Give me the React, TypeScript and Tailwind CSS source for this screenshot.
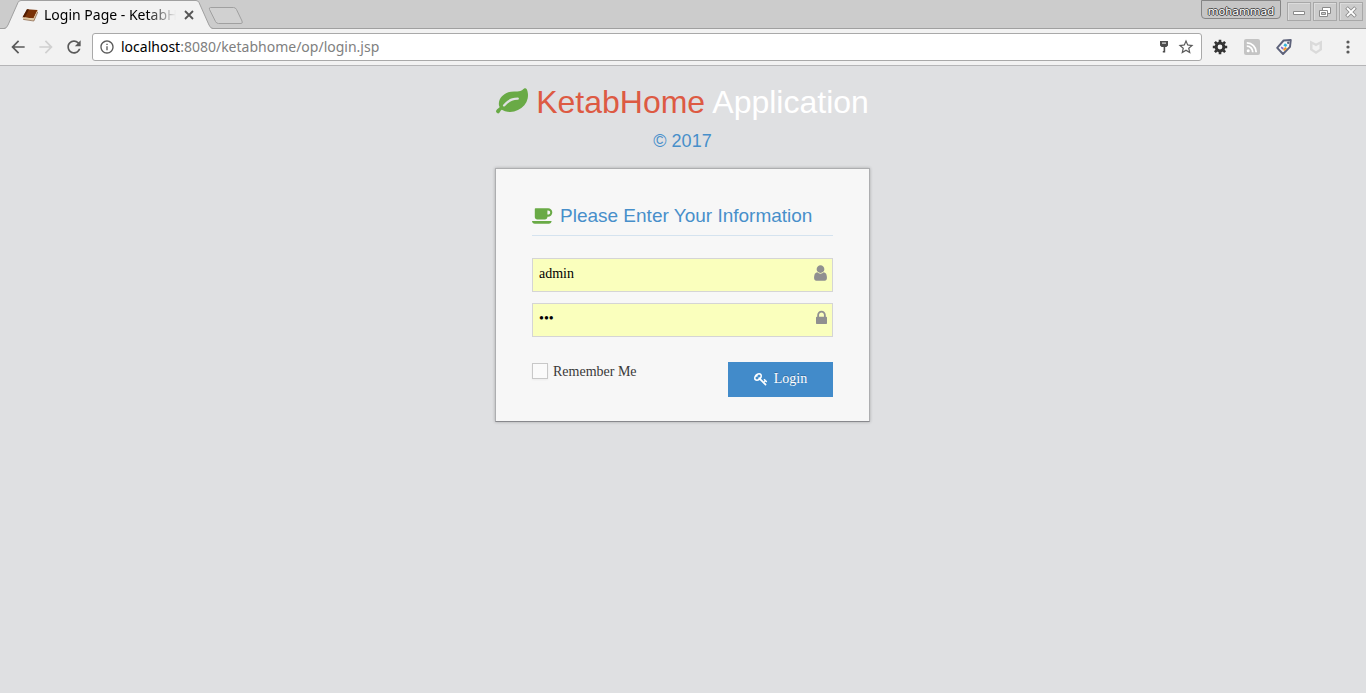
import React, { useState } from "react";

type IconProps = { className?: string };

function Glyph({ d, viewBox, className }: { d: string; viewBox: string; className?: string }) {
  return (
    <svg viewBox={viewBox} className={className} fill="currentColor" aria-hidden="true">
      <path d={d} />
    </svg>
  );
}

const LEAF =
  "M1280 704q0-26-19-45t-45-19q-172 0-318 49.5t-259.5 134-235.5 219.5q-19 21-19 45 0 26 19 45t45 19q24 0 45-19 27-24 74-71t67-66q137-124 268.5-176t313.5-52q26 0 45-19t19-45zm512-198q0 95-20 193-46 224-184.5 383t-357.5 268q-214 108-438 108-148 0-286-47-15-5-88-42t-96-37q-16 0-39.5 32t-45 70-52.5 70-60 32q-43 0-63.5-17.5t-45.5-59.5q-2-4-6-11t-5.5-10-3-9.5-1.5-13.5q0-35 31-73.5t68-65.5 68-56 31-48q0-4-14-38t-16-44q-9-51-9-104 0-115 43.5-220t119-184.5 170.5-139 204-95.5q55-18 145-25.5t179.5-9 178.5-6 163.5-24 113.5-56.5l29.5-29.5 29.5-28 27-20 36.5-16 43.5-4.5q39 0 70.5 46t47.5 112 24 124 8 96z";
const COFFEE =
  "M1664 576q0-80-56-136t-136-56h-64v384h64q80 0 136-56t56-136zm-1664 768h1792q0 106-75 181t-181 75h-1280q-106 0-181-75t-75-181zm1856-768q0 159-112.5 271.5t-271.5 112.5h-64v32q0 92-66 158t-158 66h-704q-92 0-158-66t-66-158v-736q0-26 19-45t45-19h1152q159 0 271.5 112.5t112.5 271.5z";
const USER =
  "M1536 1399q0 109-62.5 187t-150.5 78h-854q-88 0-150.5-78t-62.5-187q0-85 8.5-160.5t31.5-152 58.5-131 94-89 134.5-34.5q131 128 313 128t313-128q76 0 134.5 34.5t94 89 58.5 131 31.5 152 8.5 160.5zm-256-887q0 159-112.5 271.5t-271.5 112.5-271.5-112.5-112.5-271.5 112.5-271.5 271.5-112.5 271.5 112.5 112.5 271.5z";
const LOCK =
  "M640 768h512v-192q0-106-75-181t-181-75-181 75-75 181v192zm832 96v576q0 40-28 68t-68 28h-960q-40 0-68-28t-28-68v-576q0-40 28-68t68-28h32v-192q0-184 132-316t316-132 316 132 132 316v192h32q40 0 68 28t28 68z";
const KEY =
  "M832 512q0-80-56-136t-136-56-136 56-56 136q0 42 19 83-41-19-83-19-80 0-136 56t-56 136 56 136 136 56 136-56 56-136q0-42-19-83 41 19 83 19 80 0 136-56t56-136zm851 704q0 17-49 66t-66 49q-9 0-28.5-16t-36.5-33-38.5-40-24.5-26l-96 96 220 220q28 28 28 68 0 42-39 81t-81 39q-40 0-68-28l-671-671q-176 131-365 131-163 0-265.5-102.5t-102.5-265.5q0-160 95-313t248-248 313-95q163 0 265.5 102.5t102.5 265.5q0 189-131 365l355 355 96-96q-3-3-26-24.5t-40-38.5-33-36.5-16-28.5q0-17 49-66t66-49q13 0 23 10 6 6 46 44.5t82 79.5 86.5 86 73 78 28.5 41z";
const STAR =
  "M22 9.24l-7.19-.62L12 2 9.19 8.63 2 9.24l5.46 4.73L5.82 21 12 17.27 18.18 21l-1.63-7.03L22 9.24zM12 15.4l-3.76 2.27 1-4.28-3.32-2.88 4.38-.38L12 6.1l1.71 4.04 4.38.38-3.32 2.88 1 4.28L12 15.4z";
const BACK = "M20 11H7.83l5.59-5.59L12 4l-8 8 8 8 1.41-1.41L7.83 13H20v-2z";
const FORWARD = "M12 4l-1.41 1.41L16.17 11H4v2h12.17l-5.58 5.59L12 20l8-8z";
const RELOAD =
  "M17.65 6.35C16.2 4.9 14.21 4 12 4c-4.42 0-7.99 3.58-7.99 8s3.57 8 7.99 8c3.73 0 6.84-2.55 7.73-6h-2.08c-.82 2.33-3.04 4-5.65 4-3.31 0-6-2.69-6-6s2.69-6 6-6c1.66 0 3.14.69 4.22 1.78L13 11h7V4l-2.35 2.35z";
const INFO =
  "M11 17h2v-6h-2v6zm1-15C6.48 2 2 6.48 2 12s4.48 10 10 10 10-4.48 10-10S17.52 2 12 2zm0 18c-4.41 0-8-3.59-8-8s3.59-8 8-8 8 3.59 8 8-3.59 8-8 8zM11 9h2V7h-2v2z";

function BookIcon({ className }: IconProps) {
  return (
    <svg viewBox="0 0 16 16" className={className} aria-hidden="true">
      <path d="M5 2.2 15.6 3 11.6 11.4.6 10.2Z" fill="#7a3206" />
      <path d="M5 2.2 7 2.4 2.8 10.4.6 10.2Z" fill="#4f1c02" />
      <path d="M.6 10.2 11.4 11.4 15.6 3 15.8 4.6 11.8 13.6 1.4 12.2Z" fill="#e0c8a0" />
      <path d="M1.2 12.4 11.8 14 15.8 5" fill="none" stroke="#6b3a14" strokeWidth=".6" />
    </svg>
  );
}

function GearIcon({ className }: IconProps) {
  return (
    <svg viewBox="0 0 16 16" className={className} fill="none" stroke="#333" aria-hidden="true">
      <circle cx="8" cy="8" r="3.900" strokeWidth="3" />
      <path d="M8 .8V3M8 13v2.200M.8 8H3M13 8h2.200M2.900 2.900 4.500 4.500M11.500 11.500l1.600 1.600M2.900 13.100l1.600-1.600M11.500 4.500l1.600-1.600" strokeWidth="2.600" />
    </svg>
  );
}

function RssIcon({ className }: IconProps) {
  return (
    <svg viewBox="0 0 16 16" className={className} aria-hidden="true">
      <rect width="16" height="16" rx="2" fill="#c4c4c4" />
      <circle cx="4.2" cy="11.8" r="1.5" fill="#fff" />
      <path d="M2.8 7.2a6 6 0 0 1 6 6M2.8 3.8a9.4 9.4 0 0 1 9.4 9.4" fill="none" stroke="#fff" strokeWidth="1.8" />
    </svg>
  );
}

function TagIcon({ className }: IconProps) {
  return (
    <svg viewBox="0 0 16 16" className={className} aria-hidden="true">
      <path d="M7.600 1.500 14.800 1 14 7.800 7 15 1.200 8.800Z" fill="#f4f4f6" stroke="#5d627a" strokeWidth="1.900" strokeLinejoin="round" />
      <circle cx="12.200" cy="3.800" r="1.200" fill="#5d627a" />
      <path d="M9 4.200 11.400 6 9.800 8 7.400 6.400Z" fill="#35b4d8" />
      <path d="M5.400 7.400 7.800 9 7 10.800 4.800 9Z" fill="#8467c9" />
      <path d="M9.200 8 11 9.200 8.400 12 7 10.800Z" fill="#f39a2b" />
    </svg>
  );
}

function ShieldIcon({ className }: IconProps) {
  return (
    <svg viewBox="0 0 16 16" className={className} aria-hidden="true">
      <path d="M2 1.500 8 4.500 14 1.500V11L8 15 2 11ZM4.500 5.200V9.900L8 12.300 11.500 9.900V5.200L8 7.200Z" fill="#dadada" fillRule="evenodd" />
    </svg>
  );
}

function SavedKeyIcon({ className }: IconProps) {
  return (
    <svg viewBox="0 0 10 14" className={className} aria-hidden="true">
      <path d="M1 1h8v4.4L7.4 7H6.2v5.4H3.8V11h.8V7H2.6L1 5.4Z" fill="#4d4d4d" />
      <path d="M3 2.6h4v1H3z" fill="#fff" />
    </svg>
  );
}

function WindowButton({ label, children }: { label: string; children: React.ReactNode }) {
  return (
    <button
      type="button"
      aria-label={label}
      className="flex h-[19px] w-6 items-center justify-center border border-[#a8a8a8] bg-[#cccccc] shadow-[inset_1px_1px_0_#dcdcdc]"
    >
      <svg viewBox="0 0 14 12" className="h-3 w-3.5" fill="none" aria-hidden="true">
        {children}
      </svg>
    </button>
  );
}

function TabStrip() {
  return (
    <div className="relative flex h-[29px] items-start bg-[#cccccc]">
      <div className="absolute inset-x-0 bottom-0 h-px bg-[#a0a0a0]" />
      <div className="relative h-[29px] w-[214px]">
        <svg viewBox="0 0 214 29" className="absolute inset-0 h-[29px] w-[214px]" aria-hidden="true">
          <path d="M4 29C6 28.500 7 27.500 8 25L18 2.500Q19 .5 21 .5H196Q198 .5 199 2.500L209 25Q210.500 28.500 213 29Z" fill="#f2f2f2" />
          <path d="M0 28.500H4Q6.500 28.500 8 25L18 2.500Q19 .5 21 .5H196Q198 .5 199 2.500L209 25Q210.500 28.500 213 28.500" fill="none" stroke="#a0a0a0" />
        </svg>
        <div className="relative flex h-[29px] items-center pl-[22px]">
          <BookIcon className="h-4 w-4 shrink-0" />
          <span className="ml-1.5 w-[132px] font-['Noto_Sans',sans-serif] text-[14px] leading-5 whitespace-nowrap text-black [mask-image:linear-gradient(to_right,#000_78%,transparent)]">
            Login Page - KetabH
          </span>
          <button type="button" aria-label="Close tab" className="ml-[5px] flex h-4 w-4 items-center justify-center">
            <svg viewBox="0 0 10 10" className="h-2.5 w-2.5" aria-hidden="true">
              <path d="M1 1 9 9M9 1 1 9" stroke="#555" strokeWidth="1.800" />
            </svg>
          </button>
        </div>
      </div>
      <button type="button" aria-label="New tab" className="relative -ml-1.5 pt-1.5">
        <svg viewBox="0 0 36 18" className="h-[18px] w-9" aria-hidden="true">
          <path d="M2.500 1.500H25.500Q27.500 1.500 28.500 3.500L34 15Q35 17.500 33 17.500H10.500Q8.500 17.500 7.500 15.500L1.500 3.500Q.8 1.500 2.500 1.500Z" fill="#d1d1d1" stroke="#a0a0a0" />
        </svg>
      </button>
      <div className="relative ml-auto flex items-start gap-0.5 pr-[3px]">
        <button
          type="button"
          className="mr-1 flex h-[19px] w-20 items-center justify-center rounded-b-[4px] border border-[#858585] bg-[#c6c6c6] pt-1 font-['DejaVu_Sans',sans-serif] text-[11px] leading-4 text-white [text-shadow:1px_0_#444,-1px_0_#444,0_1px_#444,0_-1px_#444]"
        >
          mohammad
        </button>
        <div className="flex gap-0.5 pt-0.5">
          <WindowButton label="Minimize">
            <path d="M1.500 5.500h11v3h-11z" fill="#fff" stroke="#8a8a8a" />
          </WindowButton>
          <WindowButton label="Restore">
            <path d="M4.500 1.500h8v6h-8z" fill="#fff" stroke="#8a8a8a" />
            <path d="M1.500 4.500h8v6h-8z" fill="#fff" stroke="#8a8a8a" />
            <path d="M3.500 6.500h4v2h-4z" fill="#ccc" stroke="#8a8a8a" />
          </WindowButton>
          <WindowButton label="Close">
            <path d="M2.500 1.500 11.500 10.500M11.500 1.500 2.500 10.500" stroke="#8a8a8a" strokeWidth="3.600" />
            <path d="M3 2 11 10M11 2 3 10" stroke="#fff" strokeWidth="1.800" />
          </WindowButton>
        </div>
      </div>
    </div>
  );
}

function Toolbar() {
  return (
    <div className="flex h-[37px] items-center border-b border-[#b5b5b7] bg-[#f2f2f2] pr-2.5 pl-2">
      <div className="flex items-center gap-2">
        <button type="button" aria-label="Back">
          <Glyph d={BACK} viewBox="0 0 24 24" className="h-5 w-5 text-[#5a5a5a]" />
        </button>
        <button type="button" aria-label="Forward" disabled>
          <Glyph d={FORWARD} viewBox="0 0 24 24" className="h-5 w-5 text-[#d0d0d0]" />
        </button>
        <button type="button" aria-label="Reload">
          <Glyph d={RELOAD} viewBox="0 0 24 24" className="h-5 w-5 text-[#5a5a5a]" />
        </button>
      </div>
      <div className="ml-2 flex h-7 flex-1 items-center rounded-[3px] border border-[#a9a9a9] bg-white px-1.5">
        <Glyph d={INFO} viewBox="0 0 24 24" className="h-4 w-4 text-[#5a5a5a]" />
        <div className="ml-1.5 flex-1 font-['Noto_Sans',sans-serif] text-[14px] leading-5 text-[#808080]">
          <span className="text-black">localhost</span>:8080/ketabhome/op/login.jsp
        </div>
        <button type="button" aria-label="Saved password">
          <SavedKeyIcon className="h-3.5 w-2.5" />
        </button>
        <button type="button" aria-label="Bookmark this page" className="ml-2">
          <Glyph d={STAR} viewBox="0 0 24 24" className="h-[18px] w-[18px] text-[#5a5a5a]" />
        </button>
      </div>
      <div className="ml-2.5 flex items-center gap-4">
        <button type="button" aria-label="Settings">
          <GearIcon className="h-4 w-4" />
        </button>
        <button type="button" aria-label="Feeds">
          <RssIcon className="h-4 w-4" />
        </button>
        <button type="button" aria-label="Tags">
          <TagIcon className="h-4 w-4" />
        </button>
        <button type="button" aria-label="Site safety">
          <ShieldIcon className="h-4 w-4" />
        </button>
        <button type="button" aria-label="Menu">
          <svg viewBox="0 0 16 16" className="h-4 w-4" fill="#5a5a5a" aria-hidden="true">
            <circle cx="8" cy="3" r="1.600" />
            <circle cx="8" cy="8" r="1.600" />
            <circle cx="8" cy="13" r="1.600" />
          </svg>
        </button>
      </div>
    </div>
  );
}

function Field({
  label,
  type,
  initial,
  children,
}: {
  label: string;
  type: string;
  initial: string;
  children: React.ReactNode;
}) {
  const [value, setValue] = useState(initial);
  return (
    <label className="relative block">
      <input
        aria-label={label}
        type={type}
        value={value}
        onChange={(event) => setValue(event.target.value)}
        className="block h-[34px] w-full border border-[#d5d5d5] bg-[#faffbd] pt-1.5 pr-7 pb-2 pl-1.5 text-[14px] leading-[18px] text-black outline-none"
      />
      <span className="absolute top-1.5 right-1.5 text-[#909090]">{children}</span>
    </label>
  );
}

function LoginCard() {
  const [remember, setRemember] = useState(false);
  return (
    <form
      onSubmit={(event) => event.preventDefault()}
      className="mt-4 w-[375px] border border-[#adaeb0] border-b-[#88898d] bg-[#f7f7f7] px-9 pt-9 pb-6 shadow-[0_0_3px_rgba(0,0,0,0.25)]"
    >
      <h2 className="flex items-center gap-[7px] border-b border-[#d5e3ef] pb-2 font-['Liberation_Sans',sans-serif] text-[19px] leading-[22px] text-[#478fca]">
        <Glyph d={COFFEE} viewBox="0 0 1920 1792" className="h-5 w-[21px] text-[#69aa46]" />
        Please Enter Your Information
      </h2>
      <div className="mt-[22px] flex flex-col gap-[11px]">
        <Field label="Username" type="text" initial="admin">
          <Glyph d={USER} viewBox="256 0 1280 1792" className="h-[18px] w-[13px]" />
        </Field>
        <Field label="Password" type="password" initial="123">
          <Glyph d={LOCK} viewBox="320 0 1152 1792" className="h-[18px] w-[11px]" />
        </Field>
      </div>
      <div className="mt-[25px] flex items-start justify-between">
        <label className="flex items-start gap-[5px] text-[14px] leading-5 text-[#393939]">
          <input
            type="checkbox"
            checked={remember}
            onChange={(event) => setRemember(event.target.checked)}
            className="mt-px h-4 w-4 appearance-none border border-[#c8c8c8] bg-[#fafafa] shadow-[0_1px_2px_rgba(0,0,0,0.05)] checked:bg-[#428bca]"
          />
          Remember Me
        </label>
        <button
          type="submit"
          className="flex h-[35px] w-[105px] items-center justify-center gap-1.5 bg-[#428bca] pb-0.5 text-[14px] leading-5 text-white [text-shadow:0_-1px_0_rgba(0,0,0,0.25)]"
        >
          <Glyph d={KEY} viewBox="0 0 1792 1792" className="h-3.5 w-3.5" />
          Login
        </button>
      </div>
    </form>
  );
}

export default function App() {
  return (
    <div className="flex min-h-screen flex-col bg-[#dfe0e2] font-['Liberation_Serif',serif]">
      <header>
        <TabStrip />
        <Toolbar />
      </header>
      <main className="flex flex-1 flex-col items-center pt-4 pr-px">
        <h1 className="flex items-center gap-2 font-['Liberation_Sans',sans-serif] text-[32px] leading-10 text-white">
          <Glyph d={LEAF} viewBox="0 0 1792 1792" className="h-8 w-8 text-[#69aa46]" />
          <span>
            <span className="text-[#dd5a43]">KetabHome</span> Application
          </span>
        </h1>
        <p className="mt-2 font-['Liberation_Sans',sans-serif] text-[18px] leading-[22px] text-[#478fca]">© 2017</p>
        <LoginCard />
      </main>
    </div>
  );
}
